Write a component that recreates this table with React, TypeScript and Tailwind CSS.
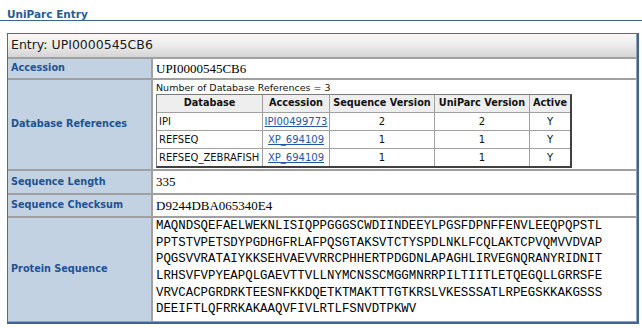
import { Fragment } from "react";

export default function App() {
  const sans = "font-['DejaVu_Sans','Verdana',sans-serif]";
  const label = `bg-[#c2d2e2] flex items-center pl-[3px] text-[9.7px] font-bold text-[#1f5290] ${sans}`;
  const value = "bg-white flex items-center pl-[3px] text-[13px] text-black font-['Liberation_Serif',serif]";
  const th = `bg-[#eeeeee] flex items-center justify-center text-[9.7px] font-bold text-[#111] ${sans}`;
  const td = `bg-white flex items-center text-[10px] text-[#111] ${sans}`;
  const link = "text-[#2356a8] underline";
  const rows = [
    ["IPI", "IPI00499773", "2", "2", "Y"],
    ["REFSEQ", "XP_694109", "1", "1", "Y"],
    ["REFSEQ_ZEBRAFISH", "XP_694109", "1", "1", "Y"],
  ];
  const seq = [
    "MAQNDSQEFAELWEKNLISIQPPGGGSCWDIINDEEYLPGSFDPNFFENVLEEQPQPSTL",
    "PPTSTVPETSDYPGDHGFRLAFPQSGTAKSVTCTYSPDLNKLFCQLAKTCPVQMVVDVAP",
    "PQGSVVRATAIYKKSEHVAEVVRRCPHHERTPDGDNLAPAGHLIRVEGNQRANYRIDNIT",
    "LRHSVFVPYEAPQLGAEVTTVLLNYMCNSSCMGGMNRRPILTIITLETQEGQLLGRRSFE",
    "VRVCACPGRDRKTEESNFKKDQETKTMAKTTTGTKRSLVKESSSATLRPEGSKKAKGSSS",
    "DEEIFTLQFRRKAKAAQVFIVLRTLFSNVDTPKWV",
  ];
  return (
    <div className="w-[642px] h-[328px] bg-white overflow-hidden">
      <div className={`h-[21px] border-b border-[#3a6593] pl-[7px] pt-[8px] leading-[12px] text-[10.5px] font-bold text-[#2a5b8e] ${sans}`}>
        UniParc Entry
      </div>
      <div className="mt-[12px] ml-[7px] w-[632px] border-l border-t border-[#4a6d9a] border-r-2 border-b-2 border-r-[#3c6496] border-b-[#3c6496]">
        <div className="grid grid-cols-[143px_483px] grid-rows-[23px_19px_89px_22px_21px_103px] gap-[2px] bg-[#a0a0a0] pr-px pb-px">
          <div className={`col-span-2 flex items-center pl-[3px] bg-gradient-to-b from-[#f8f8f8] via-[#ececec] to-[#d4d4d4] text-[12.5px] text-[#1a1a1a] ${sans}`}>
            Entry: UPI0000545CB6
          </div>
          <div className={label}>Accession</div>
          <div className={value}>UPI0000545CB6</div>
          <div className={label}>Database References</div>
          <div className="bg-white pl-[3px] pt-[2px] flex flex-col">
            <div className={`leading-[12px] text-[9.5px] text-[#111] ${sans}`}>Number of Database References = 3</div>
            <div className="w-fit grid grid-cols-[105px_66px_104px_94px_40px] grid-rows-[17px_17px_17px_17px] gap-px bg-[#a0a0a0] border-t border-l border-[#7a7a7a] border-r-2 border-b-2 border-r-[#404040] border-b-[#404040]">
              <div className={th}>Database</div>
              <div className={th}>Accession</div>
              <div className={th}>Sequence Version</div>
              <div className={th}>UniParc Version</div>
              <div className={th}>Active</div>
              {rows.map((r, i) => (
                <Fragment key={i}>
                  <div className={`${td} pl-[2px]`}>{r[0]}</div>
                  <div className={`${td} justify-center`}>
                    <span className={link}>{r[1]}</span>
                  </div>
                  <div className={`${td} justify-center`}>{r[2]}</div>
                  <div className={`${td} justify-center`}>{r[3]}</div>
                  <div className={`${td} justify-center`}>{r[4]}</div>
                </Fragment>
              ))}
            </div>
          </div>
          <div className={label}>Sequence Length</div>
          <div className={value}>335</div>
          <div className={label}>Sequence Checksum</div>
          <div className={value}>D9244DBA065340E4</div>
          <div className={label}>Protein Sequence</div>
          <div className="bg-white pl-[3px] font-['Liberation_Mono',monospace] text-[12.4px] leading-[16.67px] text-black">
            {seq.map((s, i) => (
              <div key={i} className="whitespace-pre">{s}</div>
            ))}
          </div>
        </div>
      </div>
    </div>
  );
}
